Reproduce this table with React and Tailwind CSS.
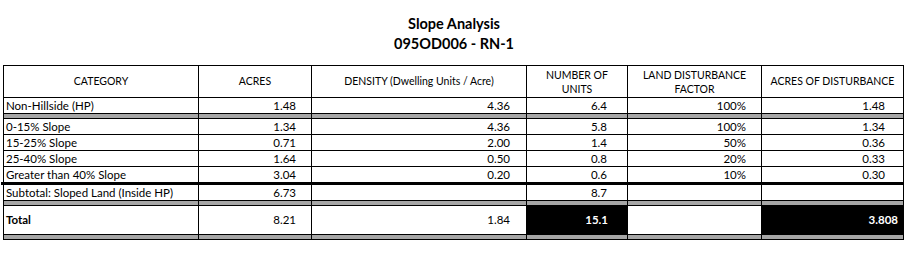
export default function App() {
  const cols = "grid grid-cols-[195px_113px_215px_101px_134px_141px]";

  const rows = [
    { cat: "0-15% Slope", acres: "1.34", density: "4.36", units: "5.8", factor: "100%", dist: "1.34" },
    { cat: "15-25% Slope", acres: "0.71", density: "2.00", units: "1.4", factor: "50%", dist: "0.36" },
    { cat: "25-40% Slope", acres: "1.64", density: "0.50", units: "0.8", factor: "20%", dist: "0.33" },
    { cat: "Greater than 40% Slope", acres: "3.04", density: "0.20", units: "0.6", factor: "10%", dist: "0.30" },
  ];

  const cell = "border-r border-black h-[15px] leading-[15px] whitespace-nowrap";

  const DataRow = ({ r, last }) => (
    <div className={`${cols} ${last ? "" : "border-b border-black"}`}>
      <div className={`${cell} pl-[2px]`}>{r.cat}</div>
      <div className={`${cell} text-right pr-[15px]`}>{r.acres}</div>
      <div className={`${cell} text-right pr-[16px]`}>{r.density}</div>
      <div className={`${cell} text-right pr-[20px]`}>{r.units}</div>
      <div className={`${cell} text-right pr-[15px]`}>{r.factor}</div>
      <div className="h-[15px] leading-[15px] text-right pr-[18px]">{r.dist}</div>
    </div>
  );

  const GrayRow = () => (
    <div className={`${cols} border-b border-black h-[5px]`}>
      <div className="bg-[#a6a6a6] border-r border-black h-[4px]" />
      <div className="bg-[#a6a6a6] border-r border-black h-[4px]" />
      <div className="bg-[#a6a6a6] border-r border-black h-[4px]" />
      <div className="bg-[#a6a6a6] border-r border-black h-[4px]" />
      <div className="bg-[#a6a6a6] border-r border-black h-[4px]" />
      <div className="bg-[#a6a6a6] h-[4px]" />
    </div>
  );

  return (
    <div className="w-[908px] h-[254px] bg-white text-black text-[11.5px] font-['Lato','Liberation_Sans',sans-serif] pt-[14px]">
      <div className="text-center font-bold text-[14.5px] leading-[20px]">
        <div>Slope Analysis</div>
        <div>095OD006 - RN-1</div>
      </div>

      <div className="ml-[3px] mt-[11px] w-[901px] border border-black">
        <div className={`${cols} border-b border-black h-[32px] text-[10.5px]`}>
          {["CATEGORY", "ACRES", "DENSITY (Dwelling Units / Acre)"].map((h) => (
            <div key={h} className="border-r border-black flex items-center justify-center">
              {h}
            </div>
          ))}
          <div className="border-r border-black flex items-center justify-center text-center leading-[14px]">
            NUMBER OF
            <br />
            UNITS
          </div>
          <div className="border-r border-black flex items-center justify-center text-center leading-[14px]">
            LAND DISTURBANCE
            <br />
            FACTOR
          </div>
          <div className="flex items-center justify-center">ACRES OF DISTURBANCE</div>
        </div>

        <DataRow r={{ cat: "Non-Hillside (HP)", acres: "1.48", density: "4.36", units: "6.4", factor: "100%", dist: "1.48" }} />
        <GrayRow />

        {rows.map((r, i) => (
          <DataRow key={r.cat} r={r} last={i === rows.length - 1} />
        ))}

        <div className="h-[3px] bg-black -ml-[3px]" />

        <DataRow r={{ cat: "Subtotal: Sloped Land (Inside HP)", acres: "6.73", density: "", units: "8.7", factor: "", dist: "" }} />
        <GrayRow />

        <div className={`${cols} border-b border-black h-[29px]`}>
          <div className="border-r border-black flex items-center pl-[2px] font-bold">Total</div>
          <div className="border-r border-black flex items-center justify-end pr-[15px]">8.21</div>
          <div className="border-r border-black flex items-center justify-end pr-[16px]">1.84</div>
          <div className="border-r border-black bg-black text-white font-bold flex items-center justify-end pr-[19px]">15.1</div>
          <div className="border-r border-black" />
          <div className="bg-black text-white font-bold flex items-center justify-end pr-[5px]">3.808</div>
        </div>

        <div className={`${cols} h-[4px]`}>
          <div className="bg-[#a6a6a6] border-r border-black" />
          <div className="bg-[#a6a6a6] border-r border-black" />
          <div className="bg-[#a6a6a6] border-r border-black" />
          <div className="bg-[#a6a6a6] border-r border-black" />
          <div className="bg-[#a6a6a6] border-r border-black" />
          <div className="bg-[#a6a6a6]" />
        </div>
      </div>
    </div>
  );
}
